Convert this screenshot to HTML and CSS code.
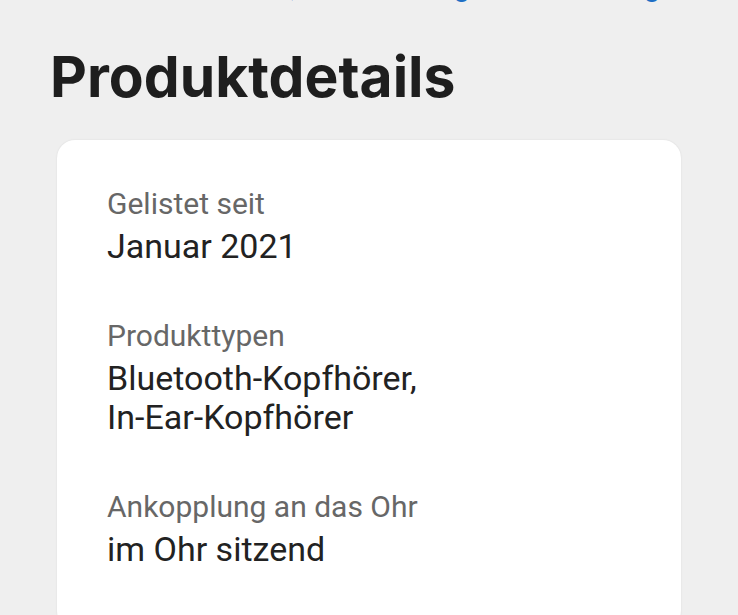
FILE: index.html
```html
<!DOCTYPE html>
<html lang="de">
<head>
<meta charset="utf-8">
<title>Produktdetails</title>
<link rel="stylesheet" href="styles.css">
</head>
<body>
<div class="page">
  <a class="top-link" href="#">Garantie, Verwendung und Lieferung</a>
  <h1 class="title">Produktdetails</h1>
  <section class="card">
    <div class="item">
      <div class="label">Gelistet seit</div>
      <div class="value">Januar 2021</div>
    </div>
    <div class="item">
      <div class="label">Produkttypen</div>
      <div class="value">Bluetooth-Kopfhörer,<br>In-Ear-Kopfhörer</div>
    </div>
    <div class="item">
      <div class="label">Ankopplung an das Ohr</div>
      <div class="value">im Ohr sitzend</div>
    </div>
  </section>
</div>
</body>
</html>
```
FILE: styles.css
```css
html, body {
  margin: 0;
  padding: 0;
  background: #efefef;
  overflow: hidden;
}
body {
  font-family: Roboto, "Noto Sans", sans-serif;
  color: #222222;
}
.page {
  display: flex;
  flex-direction: column;
}
.top-link {
  display: block;
  margin-top: -32px;
  padding-left: 178px;
  font-size: 30px;
  line-height: 36px;
  color: #1f6fc5;
  text-decoration: none;
  white-space: nowrap;
}
.title {
  margin: 38px 0 0 50px;
  font-family: Inter, Roboto, sans-serif;
  font-weight: 700;
  font-size: 57px;
  line-height: 70px;
  color: #1e1e1e;
}
.card {
  margin: 28px 57px 0 57px;
  padding: 44px 50px 60px 50px;
  background: #ffffff;
  border-radius: 18px;
  box-shadow: 0 0 2px rgba(0, 0, 0, 0.1);
  display: flex;
  flex-direction: column;
  gap: 50px;
}
.item {
  display: flex;
  flex-direction: column;
  gap: 3px;
}
.label {
  font-size: 30px;
  line-height: 40px;
  color: #676767;
}
.value {
  font-size: 34px;
  line-height: 39px;
  color: #222222;
}
```
